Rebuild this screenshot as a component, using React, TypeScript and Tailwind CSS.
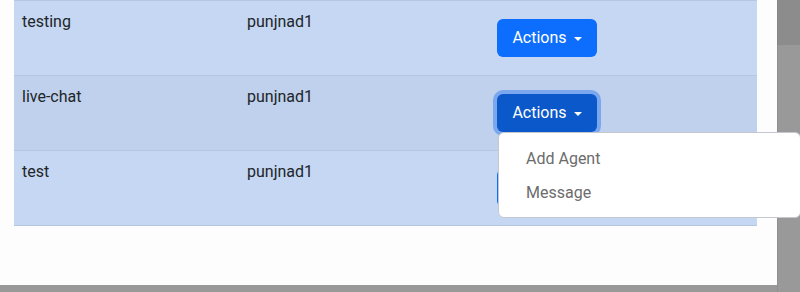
import React from 'react';

type Row = { name: string; owner: string; active?: boolean };

const rows: Row[] = [
    { name: 'testing', owner: 'punjnad1' },
    { name: 'live-chat', owner: 'punjnad1', active: true },
    { name: 'test', owner: 'punjnad1' },
];

const ActionsButton: React.FC<{ active?: boolean }> = ({ active }) => (
    <button
        className={
            active
                ? 'flex items-center justify-center w-[100px] h-[38px] rounded-[6px] bg-[#0a58ca] text-white text-[16px] ring-4 ring-[#7aa7ee]'
                : 'flex items-center justify-center w-[100px] h-[38px] rounded-[6px] bg-[#0d6efd] text-white text-[16px]'
        }
    >
        Actions
        <span className="ml-[7px] mt-[1px] w-0 h-0 border-t-[4px] border-t-white border-x-[4px] border-x-transparent" />
    </button>
);

const App: React.FC = () => {
    return (
        <div className="relative flex w-[800px] h-[292px] bg-[#999999] overflow-hidden" style={{ fontFamily: 'Roboto, "Noto Sans", sans-serif' }}>
            <div className="w-[777px] h-[285px] bg-[#fdfdfd] pl-[14px] pr-[20px]">
                <div className="border-t border-[#b5c6e0] text-[16px] text-[#212529]">
                    {rows.map(row => (
                        <div
                            key={row.name}
                            className={
                                row.active
                                    ? 'grid grid-cols-[225px_250px_1fr] h-[75px] border-b border-[#b5c6e0] bg-[#bfd1ec]'
                                    : 'grid grid-cols-[225px_250px_1fr] h-[75px] border-b border-[#b5c6e0] bg-[#c5d7f2]'
                            }
                        >
                            <div className="px-2 pt-[9px] leading-6">{row.name}</div>
                            <div className="px-2 pt-[9px] leading-6">{row.owner}</div>
                            <div className="px-2 flex items-center">
                                <ActionsButton active={row.active} />
                            </div>
                        </div>
                    ))}
                </div>
            </div>
            <div className="flex-1 flex flex-col">
                <div className="h-[45px] bg-[#8c8c8c] border-l border-[#858585]" />
                <div className="flex-1 border-l border-[#8f8f8f]" />
            </div>

            <div className="absolute left-[498px] top-[132px] w-[303px] pt-[9px] pb-[7px] bg-white border border-[#c4c8cc] rounded-[6px]">
                <div className="h-[34px] pl-[27px] flex items-center text-[16px] text-[#6c6c6c]">Add Agent</div>
                <div className="h-[34px] pl-[27px] flex items-center text-[16px] text-[#6c6c6c]">Message</div>
            </div>
        </div>
    );
};

export default App;
